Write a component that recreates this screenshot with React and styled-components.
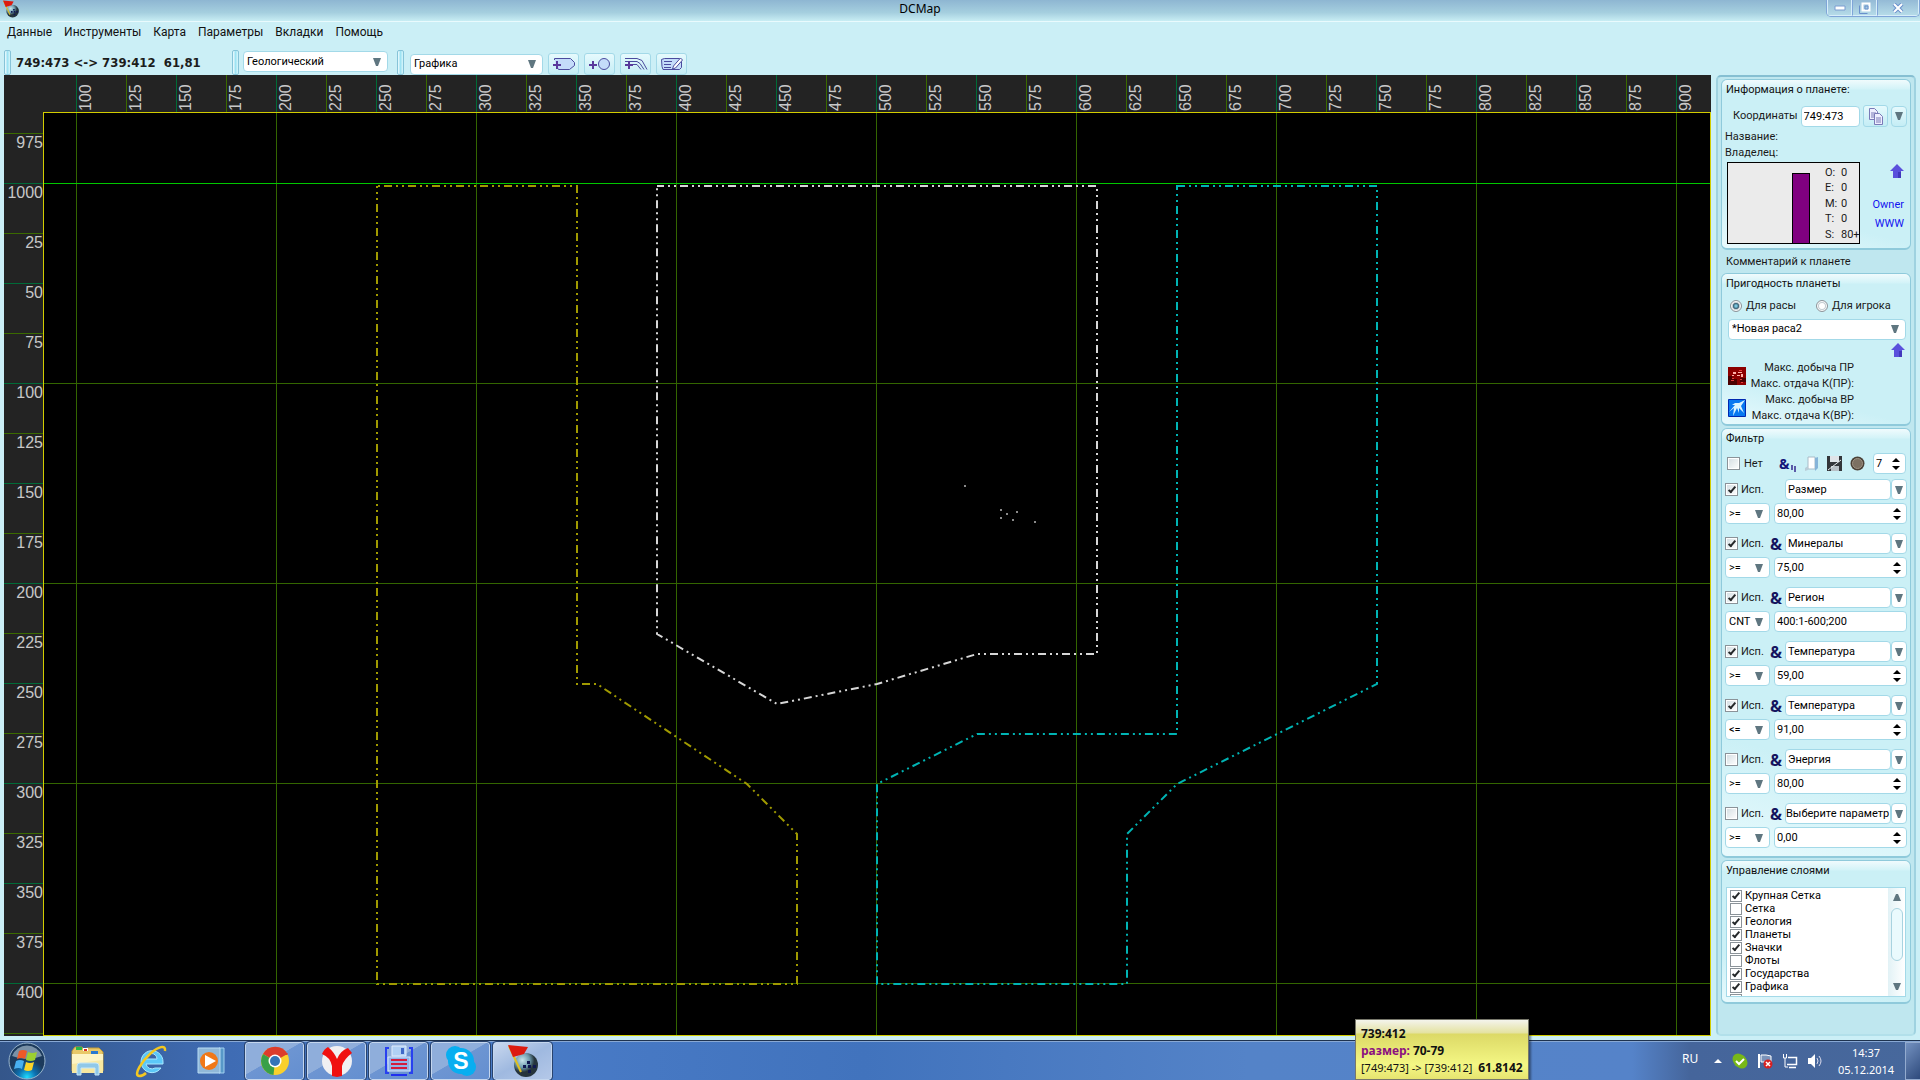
import React from "react";
import styled, { createGlobalStyle, css } from "styled-components";

const ui = 'Roboto, "Noto Sans", sans-serif';
const wide = '"DejaVu Sans Condensed", "DejaVu Sans", sans-serif';
const segoe = '"Noto Sans", "Open Sans", sans-serif';
const aqua = "#cbeff6";
const edge = "#a3d9e8";

const Global = createGlobalStyle`
  *, *::before, *::after { box-sizing: border-box; }
  html, body, #root { height: 100%; }
  body { margin: 0; overflow: hidden; background: ${aqua}; font: 11px/16px ${ui}; color: #1a1a1a; }
  button, input, select { font: inherit; color: inherit; margin: 0; padding: 0; }
  svg { display: block; }
`;

const Desktop = styled.div`
  display: flex;
  flex-direction: column;
  height: 100vh;
`;

/* ---------- window frame ---------- */
const TitleBar = styled.header`
  display: grid;
  grid-template-columns: 20px 1fr 94px;
  height: 22px;
  background: linear-gradient(#8eb6d2, #a5cfdf 60%, #c8edf4);
  border-bottom: 1px solid #e9fafd;
`;
const TitleIcon = styled.div`
  padding: 0 2px;
`;
const Title = styled.h1`
  margin: 0;
  padding-right: 6px;
  text-align: center;
  font: 12px/18px ${segoe};
  color: #000;
`;
const WindowButtons = styled.div`
  display: flex;
  height: 17px;
  border: 1px solid #7fa5d8;
  border-top: 0;
  border-radius: 0 0 5px 5px;
  overflow: hidden;
`;
const WindowButton = styled.button`
  display: grid;
  place-items: center;
  flex: ${(p) => p.$grow} 1 0;
  border: 1px solid #d8eefa;
  border-top: 0;
  background: linear-gradient(#94bad6, #b5dbe8);
  & + & { border-left: 1px solid #7fa5d8; }
`;
const MenuBar = styled.nav`
  display: flex;
  gap: 12px;
  height: 28px;
  padding: 0 7px;
  font: 12px/20px ${ui};
`;
const MenuItem = styled.a`
  color: #111;
  text-decoration: none;
`;
const ToolBar = styled.div`
  display: flex;
  align-items: center;
  height: 25px;
  padding-left: 4px;
`;
const Grip = styled.span`
  width: 7px;
  height: 25px;
  border: 1px solid #86c3d8;
  border-radius: 2px;
  background: linear-gradient(90deg, #f0fcff, #9fe3f3 50%, #d8f6fb);
`;
const Readout = styled.output`
  width: 221px;
  padding-left: 5px;
  font: bold 13px/20px ${wide};
  color: #1c1c1c;
  white-space: pre;
`;
const ToolSlot = styled.div`
  display: flex;
  align-items: center;
  gap: 5px;
  padding: ${(p) => (p.$low ? "3px 0 0 6px" : "0 9px 2px 4px")};
`;
const ToolButton = styled.button`
  display: grid;
  place-items: center;
  flex: none;
  width: ${(p) => p.$w || 31}px;
  height: 22px;
  border: 1px solid ${edge};
  border-radius: 3px;
  background: linear-gradient(#e6fafd, #c4edf5);
`;

/* ---------- shared controls ---------- */
const boxed = css`
  height: 21px;
  border: 1px solid ${edge};
  border-radius: 4px;
  background: #fff;
  color: #000;
`;
const SelectBox = styled.span`
  display: grid;
  align-items: center;
  width: ${(p) => p.$w || "auto"};
  & > * { grid-area: 1 / 1; }
  & > svg { justify-self: end; margin-right: 7px; pointer-events: none; }
`;
const NativeSelect = styled.select`
  ${boxed}
  width: 100%;
  min-width: 0;
  appearance: none;
  padding-left: 3px;
`;
const Field = styled.input`
  ${boxed}
  flex: 1;
  width: 100%;
  min-width: 0;
  padding: 0 0 0 ${(p) => (p.$tight ? 0 : 2)}px;
`;
const DropButton = styled.button`
  ${boxed}
  display: grid;
  place-items: center;
  flex: none;
  width: 16px;
  background: ${(p) => (p.$tinted ? "linear-gradient(#e6fafd, #c4edf5)" : "#fff")};
`;
const SpinBox = styled.span`
  ${boxed}
  display: flex;
  align-items: center;
  flex: ${(p) => (p.$w ? "none" : 1)};
  width: ${(p) => p.$w || "auto"};
  min-width: 0;
  padding-right: 5px;
`;
const SpinInput = styled.input`
  flex: 1;
  min-width: 0;
  width: 100%;
  border: 0;
  background: none;
  padding-left: 2px;
`;
const Tick = styled.input`
  appearance: none;
  display: grid;
  place-items: center;
  flex: none;
  width: ${(p) => p.$size || 13}px;
  height: ${(p) => p.$size || 13}px;
  border: 1px solid #8b9399;
  background: ${(p) => (p.$size ? "#fff" : "linear-gradient(135deg, #d3dde2, #fff)")};
  box-shadow: inset 0 0 0 1px #fff;
  &:checked::before {
    content: "";
    width: 4px;
    height: 8px;
    border: solid #26292b;
    border-width: 0 2px 2px 0;
    transform: translateY(-1px) rotate(40deg);
  }
`;
const Radio = styled.input`
  appearance: none;
  flex: none;
  width: 12px;
  height: 12px;
  border: 1px solid #8b9399;
  border-radius: 50%;
  background: #fff;
  box-shadow: inset 0 0 0 1px #fff, inset 0 0 0 2px #c3ccd1;
  &:checked { background: radial-gradient(circle, #7cc4dc 0 1px, #24485c 3px, #fff 4px); }
`;
const Label = styled.label`
  display: flex;
  align-items: center;
  gap: 4px;
  white-space: nowrap;
`;

const Caret = () => (
  <svg width="8" height="8" viewBox="0 0 8 8"><path d="M0 0h8L5 8H3z" fill="#5f7680" /></svg>
);
const SpinArrows = () => (
  <svg width="8" height="14" viewBox="0 0 8 14"><path d="M0 5L4 1l4 4zM0 9h8l-4 4z" fill="#000" /></svg>
);
function Select({ label, options, w }) {
  return (
    <SelectBox $w={w}>
      <NativeSelect aria-label={label}>{options.map((o) => <option key={o}>{o}</option>)}</NativeSelect>
      <Caret />
    </SelectBox>
  );
}
function Spin({ label, value, w }) {
  return (
    <SpinBox $w={w}>
      <SpinInput aria-label={label} defaultValue={value} />
      <SpinArrows />
    </SpinBox>
  );
}

/* ---------- map ---------- */
const Workspace = styled.main`
  display: flex;
  gap: 5px;
  flex: 1;
  min-height: 0;
  padding: 0 4px 4px;
`;
const MapFrame = styled.section`
  display: grid;
  grid-template: 37px 1fr / 39px 1fr;
  flex: 1;
  min-width: 0;
  background: #232323;
`;
const Ruler = styled.svg`
  width: 100%;
  height: 100%;
  overflow: hidden;
  font: 16px "Liberation Sans", sans-serif;
  fill: #c8c8c8;
  grid-column: ${(p) => (p.$side ? 1 : "1 / 3")};
  grid-row: ${(p) => (p.$side ? 2 : 1)};
`;
const Plot = styled.div`
  border: 1px solid #d2cc00;
  background: #000;
  min-height: 0;
  & > svg { width: 100%; height: 100%; }
`;

const STEP = 50;
const tickColor = (v) => (v % 50 ? "#3a6a00" : "#006b38");
const columns = Array.from({ length: 33 }, (_, i) => 100 + i * 25);
const rows = [975, 1000, ...Array.from({ length: 16 }, (_, i) => 25 + i * 25)];

/* One world unit is two pixels, measured from the plot's inner corner. */
const px = (x) => (x - 100) * 2 + 33;
const py = (y) => y * 2 + 71;
const outline = (pts) => "M" + pts.map(([x, y]) => `${px(x)} ${py(y)}`).join("L") + "Z";

const states = [
  { color: "#a09a00", offset: -7, pts: [[250, 1], [350, 1], [350, 250], [360, 250], [435, 300], [460, 325], [460, 400], [250, 400]] },
  { color: "#d6d6d6", offset: 1, pts: [[390, 1], [610, 1], [610, 235], [550, 235], [500, 250], [450, 260], [390, 225]] },
  { color: "#00b4b4", offset: 0, pts: [[650, 1], [750, 1], [750, 250], [650, 300], [625, 325], [625, 400], [500, 400], [500, 300], [550, 275], [650, 275]] },
];
const planets = [[964, 485], [1000, 509], [1006, 513], [1016, 511], [1000, 517], [1012, 519], [1034, 521]];

function StarMap() {
  return (
    <MapFrame>
      <Ruler>
        {columns.map((v, i) => {
          const x = 72 + i * STEP;
          return (
            <g key={v}>
              <path d={`M${x + 0.5} 0V37`} stroke={tickColor(v)} />
              <text transform={`translate(${x + 15} 36) rotate(-90)`}>{v}</text>
            </g>
          );
        })}
      </Ruler>
      <Ruler $side>
        {rows.map((v, i) => {
          const y = 21 + i * STEP;
          return (
            <g key={v}>
              <path d={`M0 ${y + 0.5}H39`} stroke={tickColor(v)} />
              <text x="39" y={y + 15} textAnchor="end">{v}</text>
            </g>
          );
        })}
        <path d={`M0 ${21.5 + rows.length * STEP}H39`} stroke={tickColor(25)} />
      </Ruler>
      <Plot>
        <svg>
          <g shapeRendering="crispEdges">
            {[0, 1, 2, 3, 4, 5, 6, 7, 8].map((i) => (
              <rect key={i} x={32 + i * 200} y="0" width="1" height="100%" fill="#336600" />
            ))}
            {[0, 1, 2, 3, 4].map((i) => (
              <rect key={i} x="0" y={70 + i * 200} width="100%" height="1" fill={i ? "#336600" : "#00c800"} />
            ))}
          </g>
          {states.map((s) => (
            <path key={s.color} d={outline(s.pts)} fill="none" stroke={s.color} strokeWidth="2"
              strokeDasharray="8 4 2 4 2 4" strokeDashoffset={s.offset} />
          ))}
          {planets.map(([x, y]) => (
            <rect key={`${x}-${y}`} x={x - 44} y={y - 113} width="2" height="2" fill="#8a8a8a" />
          ))}
        </svg>
      </Plot>
    </MapFrame>
  );
}

/* ---------- side panel ---------- */
const Side = styled.aside`
  display: flex;
  flex-direction: column;
  gap: 2px;
  width: 200px;
  flex: none;
  padding: 2px 3px;
  border: 2px solid #93cbdc;
  border-color: #86bfd2 #9fd2e0 #b2e0ea #9fd2e0;
  border-radius: 5px;
  background: #bfe7ef;
`;
const Group = styled.section`
  height: ${(p) => p.$h}px;
  padding: 0 3px;
  border: 1px solid #8fcadb;
  border-bottom-width: 2px;
  border-radius: 6px;
  background: linear-gradient(#f0fbfd, #d3f3f8 9px, transparent 10px), linear-gradient(15deg, #e8fafd, #cbf0f6 25%);
`;
const GroupTitle = styled.h2`
  margin: 0 0 ${(p) => p.$gap || 0}px;
  padding: 2px 0 0 1px;
  font: inherit;
  color: #111;
`;
const Line = styled.div`
  display: flex;
  align-items: center;
  gap: ${(p) => p.$gap || 0}px;
  height: ${(p) => p.$h || 16}px;
  padding: ${(p) => p.$pad || "0"};
`;
const Note = styled.p`
  margin: 0;
  height: 19px;
  padding: 2px 5px 1px;
`;
const PlanetRow = styled.div`
  display: flex;
  justify-content: space-between;
  padding: 2px 3px 0 2px;
`;
const PlanetCard = styled.div`
  display: grid;
  grid-template-columns: 65px 18px auto;
  align-items: end;
  column-gap: 14px;
  width: 133px;
  height: 82px;
  border: 1px solid #000;
  background: #ebebeb;
`;
const Bar = styled.div`
  grid-column: 2;
  width: 18px;
  margin-left: -15px;
  border: 1px solid #000;
  border-bottom: 0;
  background: #800080;
`;
const Stats = styled.dl`
  display: grid;
  grid-template-columns: 16px auto;
  margin: 0 0 1px -14px;
  line-height: 15px;
  white-space: nowrap;
  height: 77px;
  & > * { margin: 0; }
`;
const Links = styled.div`
  display: flex;
  flex-direction: column;
  align-items: flex-end;
  gap: 3px;
`;
const Link = styled.a`
  color: #1414f0;
  text-decoration: none;
`;
const ArrowButton = styled.button`
  display: block;
  width: 14px;
  height: 14px;
  margin: ${(p) => p.$m || "0"};
  border: 0;
  background: none;
`;
const MineGrid = styled.div`
  display: grid;
  grid-template-columns: 18px 104px;
  column-gap: 4px;
  padding: 0 0 0 3px;
  align-items: center;
`;
const MineText = styled.p`
  margin: 0;
  text-align: right;
  white-space: nowrap;
`;
const Filter = styled.div`
  display: grid;
  gap: 3px;
  margin-bottom: 9px;
`;
const Use = styled.div`
  display: flex;
  align-items: center;
  height: 21px;
`;
const UseLabel = styled(Label)`
  width: 45px;
  gap: 3px;
`;
const Amp = styled.b`
  width: 15px;
  font: bold 16px/20px ${segoe};
  color: #14145e;
`;
const LayerBox = styled.div`
  display: flex;
  height: 110px;
  margin: 0 1px;
  border: 1px solid ${edge};
  background: #fff;
`;
const Layers = styled.ul`
  flex: 1;
  margin: 0;
  padding: 1px 0 0 3px;
  overflow: hidden;
  list-style: none;
  color: #000;
`;
const Layer = styled(Label)`
  height: 13px;
  gap: 3px;
`;
const Scroll = styled.div`
  display: flex;
  flex-direction: column;
  align-items: center;
  justify-content: space-between;
  width: 17px;
  padding: 6px 2px;
  background: linear-gradient(90deg, #e2f2f6, #fff);
`;
const Thumb = styled.div`
  width: 12px;
  height: 53px;
  margin-bottom: 16px;
  border: 1px solid #a8d3e0;
  border-radius: 6px;
  background: #eafafd;
`;
const AndMark = styled.span`
  display: flex;
  align-items: flex-end;
  width: 17px;
  font: bold 14px/16px ${segoe};
  color: #14147a;
`;

const UpArrow = ({ m }) => (
  <ArrowButton $m={m} aria-label="Вверх">
    <svg width="14" height="14" viewBox="0 0 14 14"><path d="M7 0l7 7h-3v7H3V7H0z" fill="#5a50dc" /><path d="M8 8h3v6H8z" fill="#4238bc" /></svg>
  </ArrowButton>
);

const stats = [["O:", "0"], ["E:", "0"], ["M:", "0"], ["T:", "0"], ["S:", "80+"]];
const filters = [
  { on: true, name: "Размер", op: ">=", value: "80,00", first: true },
  { on: true, name: "Минералы", op: ">=", value: "75,00" },
  { on: true, name: "Регион", op: "CNT", value: "400:1-600;200", plain: true },
  { on: true, name: "Температура", op: ">=", value: "59,00" },
  { on: true, name: "Температура", op: "<=", value: "91,00" },
  { on: false, name: "Энергия", op: ">=", value: "80,00" },
  { on: false, name: "Выберите параметр", op: ">=", value: "0,00" },
];
const layers = [
  ["Крупная Сетка", true], ["Сетка", false], ["Геология", true], ["Планеты", true], ["Значки", true],
  ["Флоты", false], ["Государства", true], ["Графика", true], ["", false],
];

function PlanetInfo() {
  return (
    <Group $h={171}>
      <GroupTitle $gap={6}>Информация о планете:</GroupTitle>
      <Line $h={24} $gap={3} $pad="0 0 0 8px">
        <Label htmlFor="coords">Координаты</Label>
        <Field id="coords" defaultValue="749:473" />
        <ToolButton $w={25} aria-label="Копировать">
          <svg width="16" height="17" viewBox="0 0 16 17" fill="#eef" stroke="#7a7ab8">
            <path d="M1.500 .5h5l3 3v8h-8z" /><path d="M3 5h5M3 7h5M3 9h3" />
            <path d="M6.500 5.500h5l3 3v8h-8z" /><path d="M8 10h5M8 12h5M8 14h5" />
          </svg>
        </ToolButton>
        <DropButton $tinted aria-label="Список"><Caret /></DropButton>
      </Line>
      <Line $pad="2px 0 0">Название:</Line>
      <Line $pad="2px 0 0">Владелец:</Line>
      <PlanetRow>
        <PlanetCard>
          <Bar style={{ height: 70 }} />
          <Stats>{stats.map(([k, v]) => <React.Fragment key={k}><dt>{k}</dt><dd>{v}</dd></React.Fragment>)}</Stats>
        </PlanetCard>
        <Links>
          <UpArrow m="2px 0 16px" />
          <Link href="#owner">Owner</Link>
          <Link href="#www">WWW</Link>
        </Links>
      </PlanetRow>
    </Group>
  );
}

function Fitness() {
  return (
    <Group $h={153}>
      <GroupTitle $gap={6}>Пригодность планеты</GroupTitle>
      <Line $gap={20} $pad="0 0 0 5px">
        <Label><Radio type="radio" name="fit" defaultChecked />Для расы</Label>
        <Label><Radio type="radio" name="fit" />Для игрока</Label>
      </Line>
      <Line $h={26} $pad="4px 1px 0 3px"><Select label="Раса" options={["*Новая раса2"]} w="100%" /></Line>
      <UpArrow m="3px 2px 3px auto" />
      <MineGrid>
        <svg width="18" height="18" style={{ gridRow: "1 / 3" }} viewBox="0 0 18 18">
          <path d="M0 0h18v18H0z" fill="#8c0000" /><path d="M0 9h4v3h5v6H0zM12 11h6v4h-6z" fill="#4c0000" />
          <path d="M5 5h3v2H5zM10 5h4v1h-4zM4 8h2v1H4zM9 8h3v1H9zM13 7h2v3h-2z" fill="#ffb0a8" />
          <path d="M3 13h3v1H3zM4 11h2v1H4zM12 12h2v1h-2zM11 3h3v1h-3zM13 15h2v1h-2z" fill="#e03c3c" />
        </svg>
        <MineText>Макс. добыча ПР</MineText><MineText>Макс. отдача К(ПР):</MineText>
        <svg width="18" height="18" style={{ gridRow: "3 / 5" }} viewBox="0 0 18 18">
          <path d="M.5 .5h17v17H.5z" fill="#0878f0" stroke="#0028b0" />
          <path d="M17 1l-6 3-4 0-3 2 3 0-6 7 5-4-1 8 4-8 2 5 0-5 5 5-3-7z" fill="#d8f4ff" />
        </svg>
        <MineText>Макс. добыча ВР</MineText><MineText>Макс. отдача К(ВР):</MineText>
      </MineGrid>
    </Group>
  );
}

function FilterGroup() {
  return (
    <Group $h={430}>
      <GroupTitle $gap={6}>Фильтр</GroupTitle>
      <Line $h={21} $gap={8} $pad="0 1px 0 2px">
        <Label style={{ marginRight: "auto" }}><Tick type="checkbox" />Нет</Label>
        <AndMark>
          &amp;
          <svg width="6" height="7" viewBox="0 0 6 7"><path d="M1 0h2v5H1zM4 1h2v6H4z" fill="#5a5aa8" /></svg>
        </AndMark>
        <svg width="15" height="16" viewBox="0 0 15 16">
          <path d="M4 1h7v12H4z" fill="#fff" stroke="#a9bcc8" /><path d="M11 2l3-1v11l-3 3z" fill="#86b4d8" />
          <path d="M1 12l3-2v4l-3 1z" fill="#b8cdd8" />
        </svg>
        <svg width="15" height="16" viewBox="0 0 15 16">
          <path d="M0 0h15v15H0z" fill="#33363a" /><path d="M3 0h9v6H3z" fill="#dfe4e8" />
          <path d="M4 10h8v5H4z" fill="#b8c0c6" /><path d="M1 14L14 4" stroke="#e8ecee" />
        </svg>
        <svg width="15" height="15" viewBox="0 0 15 15">
          <circle cx="7.500" cy="7.500" r="7" fill="#4c4238" /><circle cx="7.500" cy="7.500" r="5" fill="#7c7062" stroke="#a09484" />
        </svg>
        <Spin label="Номер фильтра" value="7" w="33px" />
      </Line>
      <Line $h={5} />
      {filters.map((f, i) => (
        <Filter key={i}>
          <Use>
            <UseLabel><Tick type="checkbox" defaultChecked={f.on} />Исп.</UseLabel>
            <Amp>{f.first ? "" : "&"}</Amp>
            <Field $tight={f.name.length > 12} aria-label="Параметр" defaultValue={f.name} />
            <DropButton aria-label="Выбрать параметр"><Caret /></DropButton>
          </Use>
          <Line $h={21} $gap={4}>
            <Select label="Условие" options={[f.op]} w="45px" />
            {f.plain ? <Field aria-label="Значение" defaultValue={f.value} /> : <Spin label="Значение" value={f.value} />}
          </Line>
        </Filter>
      ))}
    </Group>
  );
}

function LayerGroup() {
  return (
    <Group $h={144}>
      <GroupTitle $gap={8}>Управление слоями</GroupTitle>
      <LayerBox>
        <Layers>
          {layers.map(([name, on]) => (
            <li key={name}><Layer><Tick type="checkbox" $size={12} defaultChecked={on} />{name}</Layer></li>
          ))}
        </Layers>
        <Scroll>
          <svg width="8" height="7"><path d="M0 7h8L5 0H3z" fill="#5f7680" /></svg>
          <Thumb />
          <svg width="8" height="7"><path d="M0 0h8L5 7H3z" fill="#5f7680" /></svg>
        </Scroll>
      </LayerBox>
    </Group>
  );
}

/* ---------- taskbar ---------- */
const TaskBar = styled.footer`
  position: relative;
  display: flex;
  align-items: stretch;
  height: 40px;
  padding-left: 8px;
  border-top: 1px solid #1e3350;
  box-shadow: inset 0 1px 0 #88a8d4;
  background: linear-gradient(90deg, #34568a, #3f6cb4 12%, #4a7cc8 25%, #4173bd 45%, #5483c8 65%, #5583c9 85%, #45659b 88%, #47689c);
`;
const Pinned = styled.button`
  display: grid;
  place-items: center;
  width: ${(p) => p.$w}px;
  border: 0;
  background: none;
`;
const Running = styled.button`
  display: grid;
  place-items: center;
  width: 59px;
  margin: 1px 3px 0 0;
  border: 1px solid #c4d6ee;
  border-radius: 3px;
  outline: 1px solid #28436e;
  outline-offset: 0;
  background: ${(p) =>
    p.$active
      ? "linear-gradient(150deg, #c9d8ee, #9fb9e0 50%, #b4c8e8)"
      : "linear-gradient(150deg, #8faedb 45%, #6d95d2 46%, #648fd0)"};
`;
const Tray = styled.div`
  display: flex;
  align-items: center;
  margin-left: auto;
  color: #fff;
  font: 11px/17px ${segoe};
`;
const Lang = styled.span`
  width: 31px;
  padding-bottom: 5px;
  font-size: 12px;
`;
const TrayIcons = styled.div`
  display: flex;
  align-items: center;
  gap: 9px;
`;
const Clock = styled.time`
  width: 76px;
  padding: 0 0 0 12px;
  text-align: center;
`;
const ShowDesktop = styled.button`
  align-self: stretch;
  width: 15px;
  margin: 1px 0 0 7px;
  border: 1px solid #93abcf;
  border-right: 0;
  background: linear-gradient(135deg, #7391c0, #2e4a7c);
`;
const Tip = styled.div`
  position: absolute;
  right: 391px;
  bottom: 0;
  width: 174px;
  height: 61px;
  padding: 5px 5px 0;
  border: 1px solid #77776a;
  background: linear-gradient(#f4f4ec, #e4e2a0 13px, #dcd966 14px, #f4f784 45px, #e6e470);
  box-shadow: 2px 1px 2px rgba(0, 0, 0, 0.4);
  font: 11px/17px ${segoe};
  color: #111;
  white-space: pre;
  & b { font-size: 12px; }
`;
const TipName = styled.b`
  color: #8b1080;
`;

const FlagGlobe = ({ size }) => (
  <svg width={size} height={size} viewBox="0 0 34 34">
    <defs><radialGradient id="globe" cx="35%" cy="30%"><stop offset="0" stopColor="#c8e4ec" /><stop offset=".6" stopColor="#6e9cae" /><stop offset="1" stopColor="#26343c" /></radialGradient></defs>
    <circle cx="20" cy="21" r="12" fill="url(#globe)" />
    <path d="M21 17h3v3h-3zM17 21h3v3h-3zM22 21h3v3h-3zM27 21h3v3h-3zM22 26h3v3h-3z" fill="#101850" />
    <path d="M3 2l12 26" stroke="#e0c020" strokeWidth="2" />
    <path d="M2 1l20 2-4 7-11 3z" fill="#dc1a10" />
  </svg>
);

const Orb = () => (
  <svg width="38" height="38" viewBox="0 0 38 38">
    <defs><radialGradient id="orb" cx="50%" cy="95%"><stop offset="0" stopColor="#20dcff" /><stop offset=".5" stopColor="#0c70b0" /><stop offset="1" stopColor="#1c3a5c" /></radialGradient></defs>
    <circle cx="19" cy="19" r="18" fill="url(#orb)" stroke="#98b4cc" />
    <path d="M4 14a16 16 0 0 1 30 0q-15 6-30 0z" fill="#b8ccd8" opacity=".6" />
    <path d="M11 9q4-2 8 0l-2 8q-3-2-8 0z" fill="#ee5a28" /><path d="M20 10q4 2 9 0l-2 8q-4 2-9 0z" fill="#9cd030" />
    <path d="M8 19q4-2 8 0l-2 8q-3-2-8 0z" fill="#48b0f0" /><path d="M18 20q4 2 8 0l-2 8q-4 2-8 0z" fill="#fcd428" />
  </svg>
);
const Folder = () => (
  <svg width="34" height="32" viewBox="0 0 34 32">
    <path d="M1 6l3-4h7l2 3 3-2h12l4 4v19H1z" fill="#e8c868" stroke="#c09a38" />
    <path d="M5 2h6v3H5z" fill="#28b848" /><path d="M20 6h7v3h-7z" fill="#2878d0" /><path d="M12 3h5v3h-5z" fill="#fff" /><path d="M13 4h3v2h-3z" fill="#d83020" />
    <path d="M1 9h31v19H1z" fill="#f8e8a0" /><path d="M1 9h31v6L1 19z" fill="#fdf4c4" />
    <path d="M6 30v-9q0-3 3-3h16q3 0 3 3v9h-4v-7H10v7z" fill="#90c8e8" stroke="#c8e8f8" />
  </svg>
);
const Explorer = () => (
  <svg width="34" height="34" viewBox="0 0 34 34">
    <path d="M29 18a11 11 0 1 0-2 6h-6a6 6 0 0 1-9-4h17zM12 15a5 5 0 0 1 11 0z" fill="#5cc8f8" stroke="#a8e8ff" />
    <path d="M31 7c1-7-7-4-14 2C8 17-1 31 5 32c2 0 5-1 7-3" fill="none" stroke="#f4c820" strokeWidth="2.500" />
  </svg>
);
const Player = () => (
  <svg width="34" height="28" viewBox="-5 0 34 28">
    <path d="M22 1h5v25h-5z" fill="#5898c8" stroke="#a0d0f0" /><path d="M1 1h22v25H1z" fill="#90b8d8" stroke="#b8dcf4" />
    <circle cx="12" cy="14" r="9" fill="#f07818" /><path d="M8 8l11 6-11 6z" fill="#fff" />
  </svg>
);
const Chrome = () => (
  <svg width="30" height="30" viewBox="0 0 30 30">
    <circle cx="15" cy="15" r="14" fill="#fad02c" />
    <path d="M15 15L3 8a14 14 0 0 1 24.500 0z" fill="#dc3c2c" /><path d="M15 15L3 8a14 14 0 0 0 10.500 21z" fill="#38a048" />
    <path d="M15 8h12.500" stroke="#dc3c2c" strokeWidth="2" />
    <circle cx="15" cy="15" r="6.500" fill="#fff" /><circle cx="15" cy="15" r="5" fill="#3474b8" />
  </svg>
);
const Yandex = () => (
  <svg width="32" height="34" viewBox="0 0 32 34">
    <circle cx="16" cy="17" r="15" fill="#f0f0f2" />
    <path d="M1 10q2-5 6-7 6 5 9 12 3-8 11-11l4 5q-8 6-10 13v10l-5 1-5-1V22Q9 13 1 10z" fill="#f01010" />
  </svg>
);
const Disk = () => (
  <svg width="30" height="32" viewBox="0 0 30 32">
    <path d="M5 3H2v25h3M25 3h3v25h-3" fill="none" stroke="#2840f0" strokeWidth="2" />
    <path d="M8 1h14v10H8z" fill="#b0d0f4" stroke="#e0ecfc" /><path d="M17 3h3v6h-3z" fill="#4068c8" />
    <path d="M4 12h22v14H4z" fill="#90b4e8" stroke="#d4e4fc" /><path d="M7 15h16M7 19h16M7 23h16" stroke="#d41c3c" strokeWidth="2" />
    <path d="M7 30h16" stroke="#2030f0" strokeWidth="2" />
  </svg>
);
const SkypeText = styled.text`
  font: bold 23px "Liberation Sans", sans-serif;
  fill: #fff;
`;
const Skype = () => (
  <svg width="32" height="32" viewBox="0 0 32 32">
    <circle cx="10" cy="10" r="9" fill="#08aef0" /><circle cx="22" cy="22" r="9" fill="#08aef0" /><circle cx="16" cy="16" r="13" fill="#08aef0" />
    <SkypeText x="16" y="24" textAnchor="middle">S</SkypeText>
  </svg>
);

const stroke = { fill: "#c4dcfa", stroke: "#4b4b9e" };
const Plus = () => <path d="M1 8h8M5 4v8" stroke="#5a3a9c" strokeWidth="2" />;

export default function App() {
  return (
    <Desktop>
      <Global />
      <TitleBar>
        <TitleIcon><FlagGlobe size={18} /></TitleIcon>
        <Title>DCMap</Title>
        <WindowButtons>
          <WindowButton $grow={25} aria-label="Свернуть"><svg width="12" height="6"><path d="M1 1h10v4H1z" fill="#fff" stroke="#7a9cd0" /></svg></WindowButton>
          <WindowButton $grow={25} aria-label="Развернуть"><svg width="12" height="12" fill="none"><path d="M3.500 1.500h7v7h-7z" stroke="#fff" strokeWidth="2" /><path d="M6 4h3v3H6zM.5 3.500v8h8" stroke="#6a90cc" /></svg></WindowButton>
          <WindowButton $grow={43} aria-label="Закрыть"><svg width="12" height="10"><path d="M2 1l8 8M10 1L2 9" stroke="#6a90cc" strokeWidth="4" /><path d="M2 1l8 8M10 1L2 9" stroke="#fff" strokeWidth="2" /></svg></WindowButton>
        </WindowButtons>
      </TitleBar>
      <MenuBar>
        {["Данные", "Инструменты", "Карта", "Параметры", "Вкладки", "Помощь"].map((m) => <MenuItem key={m} href="#menu">{m}</MenuItem>)}
      </MenuBar>
      <ToolBar>
        <Grip />
        <Readout>{"749:473 <-> 739:412  61,81"}</Readout>
        <Grip />
        <ToolSlot><Select label="Режим карты" options={["Геологический"]} w="145px" /></ToolSlot>
        <Grip />
        <ToolSlot $low>
          <Select label="Слой" options={["Графика"]} w="133px" />
          <ToolButton aria-label="Добавить область">
            <svg width="24" height="14" viewBox="0 0 24 14"><path d="M2.500 3v-1.500h16l4 4v3l-5 4h-11l-2-3" {...stroke} /><Plus /></svg>
          </ToolButton>
          <ToolButton aria-label="Добавить круг">
            <svg width="24" height="14" viewBox="0 0 24 14"><circle cx="16" cy="7" r="5.500" {...stroke} /><Plus /></svg>
          </ToolButton>
          <ToolButton aria-label="Добавить путь">
            <svg width="24" height="14" viewBox="0 0 24 14"><path d="M1 1.500h12l5 2 5 9M1 4.500h12l3 2 4 6M9 7.500h4l4 5" {...stroke} fill="none" /><Plus /></svg>
          </ToolButton>
          <ToolButton aria-label="Изменить">
            <svg width="24" height="14" viewBox="0 0 24 14"><path d="M1.500 2.500l3-1h15l2 3v6l-2 2H3l-1-3z" {...stroke} /><path d="M4 4.500h8M4 7.500h7M4 10.500h7" {...stroke} /><path d="M12.500 12l1-3 7-8 2 2-7 8z" stroke="#4b4b9e" fill="#fff" /></svg>
          </ToolButton>
        </ToolSlot>
      </ToolBar>
      <Workspace>
        <StarMap />
        <Side>
          <PlanetInfo />
          <Note>Комментарий к планете</Note>
          <Fitness />
          <FilterGroup />
          <LayerGroup />
        </Side>
      </Workspace>
      <TaskBar>
        <Pinned $w={38} aria-label="Пуск"><Orb /></Pinned>
        <Pinned $w={84} aria-label="Проводник"><Folder /></Pinned>
        <Pinned $w={42} aria-label="Internet Explorer"><Explorer /></Pinned>
        <Pinned $w={73} aria-label="Проигрыватель"><Player /></Pinned>
        <Running aria-label="Chrome"><Chrome /></Running>
        <Running aria-label="Яндекс"><Yandex /></Running>
        <Running aria-label="Диск"><Disk /></Running>
        <Running aria-label="Skype"><Skype /></Running>
        <Running $active aria-label="DCMap"><FlagGlobe size={34} /></Running>
        <Tray>
          <Lang>RU</Lang>
          <TrayIcons>
            <svg width="10" height="6"><path d="M1 5l4-4 4 4z" fill="#fff" /></svg>
            <svg width="16" height="16" viewBox="0 0 16 16"><circle cx="6" cy="6" r="5.500" fill="#78b818" /><circle cx="10" cy="10" r="5.500" fill="#78b818" /><circle cx="8" cy="8" r="6.500" fill="#78b818" /><path d="M4 8l3 3 5-5" fill="none" stroke="#fff" strokeWidth="2" /></svg>
            <svg width="16" height="16" viewBox="0 0 16 16"><path d="M2 1v14" stroke="#fff" strokeWidth="2" /><path d="M4 2h5l5 1v6H4z" fill="#7b93ba" stroke="#fff" /><circle cx="11" cy="11" r="4.500" fill="#d82020" /><path d="M9 9l4 4M13 9l-4 4" stroke="#fff" strokeWidth="1.500" /></svg>
            <svg width="16" height="16" viewBox="0 0 16 16" fill="none" stroke="#fff"><path d="M6 4.500h8.500v7H5M7 14.500h7" strokeWidth="1.500" /><path d="M1.500 1v4h3V1M3 5v9h3" /></svg>
            <svg width="15" height="16" viewBox="0 0 15 16"><path d="M1 5h3l4-4v14l-4-4H1z" fill="#fff" /><path d="M10 5q2 3 0 6M12 3q4 5 0 10" fill="none" stroke="#dde" /></svg>
          </TrayIcons>
          <Clock>14:37<br />05.12.2014</Clock>
          <ShowDesktop aria-label="Свернуть все окна" />
        </Tray>
        <Tip role="tooltip"><b>739:412</b><br /><TipName>размер:</TipName> <b>70-79</b><br />{"[749:473] -> [739:412]  "}<b>61.8142</b></Tip>
      </TaskBar>
    </Desktop>
  );
}
